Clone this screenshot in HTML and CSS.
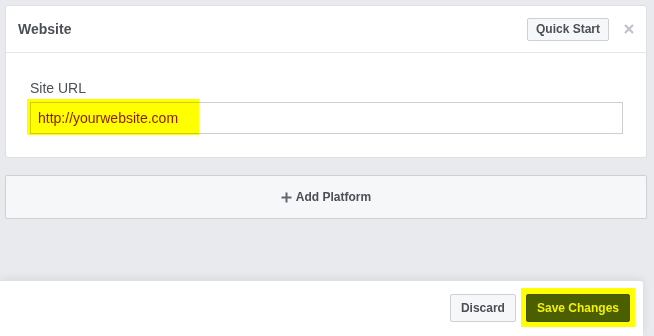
FILE: index.html
```html
<!DOCTYPE html>
<html>
<head>
<meta charset="utf-8">
<link rel="stylesheet" href="styles.css">
</head>
<body>
<div class="page">
  <div class="main">
    <section class="card">
      <header class="card-head">
        <h2 class="title">Website</h2>
        <div class="head-actions">
          <button class="btn">Quick Start</button>
          <span class="close"><svg width="10" height="10" viewBox="0 0 10 10"><path d="M1 1L9 9M9 1L1 9" stroke="#bec2c9" stroke-width="2.2" fill="none"/></svg></span>
        </div>
      </header>
      <div class="card-body">
        <label class="label">Site URL</label>
        <div class="field">
          <span class="hl"></span>
          <span class="val">http://yourwebsite.com</span>
        </div>
      </div>
    </section>
    <div class="add">
      <svg class="plus" width="11" height="11" viewBox="0 0 11 11"><path d="M5.5 0.5V10.5M0.5 5.5H10.5" stroke="#606770" stroke-width="2" fill="none"/></svg>
      <span>Add Platform</span>
    </div>
  </div>
  <footer class="footer">
    <button class="btn btn-lg">Discard</button>
    <span class="save-hl"><button class="btn btn-lg btn-save">Save Changes</button></span>
  </footer>
</div>
</body>
</html>
```
FILE: styles.css
```css
* { box-sizing: border-box; }
html, body { margin: 0; padding: 0; }
body {
  background: #e9eaed;
  font-family: "Liberation Sans", Arial, sans-serif;
  color: #4b4f56;
  width: 654px;
  height: 336px;
  overflow: hidden;
}
.page {
  display: flex;
  flex-direction: column;
  height: 336px;
}
.main {
  padding: 5px 7px 0 5px;
  display: flex;
  flex-direction: column;
  gap: 17px;
}
.card {
  background: #fff;
  border: 1px solid #dddfe2;
  border-radius: 3px;
}
.card-head {
  height: 47px;
  border-bottom: 1px solid #e5e6e9;
  display: flex;
  align-items: center;
  justify-content: space-between;
  padding: 0 12px 0 12px;
}
.title {
  margin: 0;
  font-size: 14px;
  font-weight: bold;
  color: #4b4f56;
  line-height: 18px;
}
.head-actions {
  display: flex;
  align-items: center;
  gap: 15px;
}
.close { display: flex; width: 10px; height: 10px; }
.btn {
  font-family: "Liberation Sans", Arial, sans-serif;
  font-size: 12px;
  font-weight: bold;
  color: #4b4f56;
  background: #f6f7f9;
  border: 1px solid #ced0d4;
  border-radius: 2px;
  height: 23px;
  padding: 0 8px;
  line-height: 21px;
  margin: 0;
}
.card-body {
  padding: 26px 23px 23px 24px;
  display: flex;
  flex-direction: column;
  gap: 5px;
}
.label {
  font-size: 14px;
  line-height: 18px;
  color: #4b4f56;
}
.field {
  position: relative;
  height: 32px;
  border: 1px solid #ccd0d5;
  display: flex;
  align-items: center;
  padding-left: 7px;
}
.hl {
  position: absolute;
  left: -4px;
  top: -4px;
  width: 172px;
  height: 36px;
  background: #ffff00;
  mix-blend-mode: multiply;
}
.val {
  position: relative;
  font-size: 14px;
  line-height: 18px;
  color: #8b1a00;
}
.add {
  height: 44px;
  background: #f6f7f9;
  border: 1px solid #ced0d4;
  border-radius: 2px;
  display: flex;
  align-items: center;
  justify-content: center;
  gap: 4px;
  font-size: 12px;
  font-weight: bold;
  color: #4b4f56;
}
.plus { display: block; }
.footer {
  margin-top: auto;
  width: 643px;
  height: 55px;
  background: #fff;
  border-top-right-radius: 3px;
  box-shadow: 0 -2px 10px rgba(0,0,0,0.08);
  display: flex;
  justify-content: flex-end;
  align-items: flex-start;
  padding: 7px 8px 0 0;
  gap: 5px;
}
.btn-lg {
  height: 28px;
  line-height: 26px;
  padding: 0 10px;
  margin-top: 6px;
}
.save-hl {
  background: #ffff00;
  padding: 6px 5px 5px 5px;
  display: flex;
}
.btn-save {
  margin-top: 0;
  background: #4b5e00;
  border-color: #43550a;
  color: #f2f200;
}
```
